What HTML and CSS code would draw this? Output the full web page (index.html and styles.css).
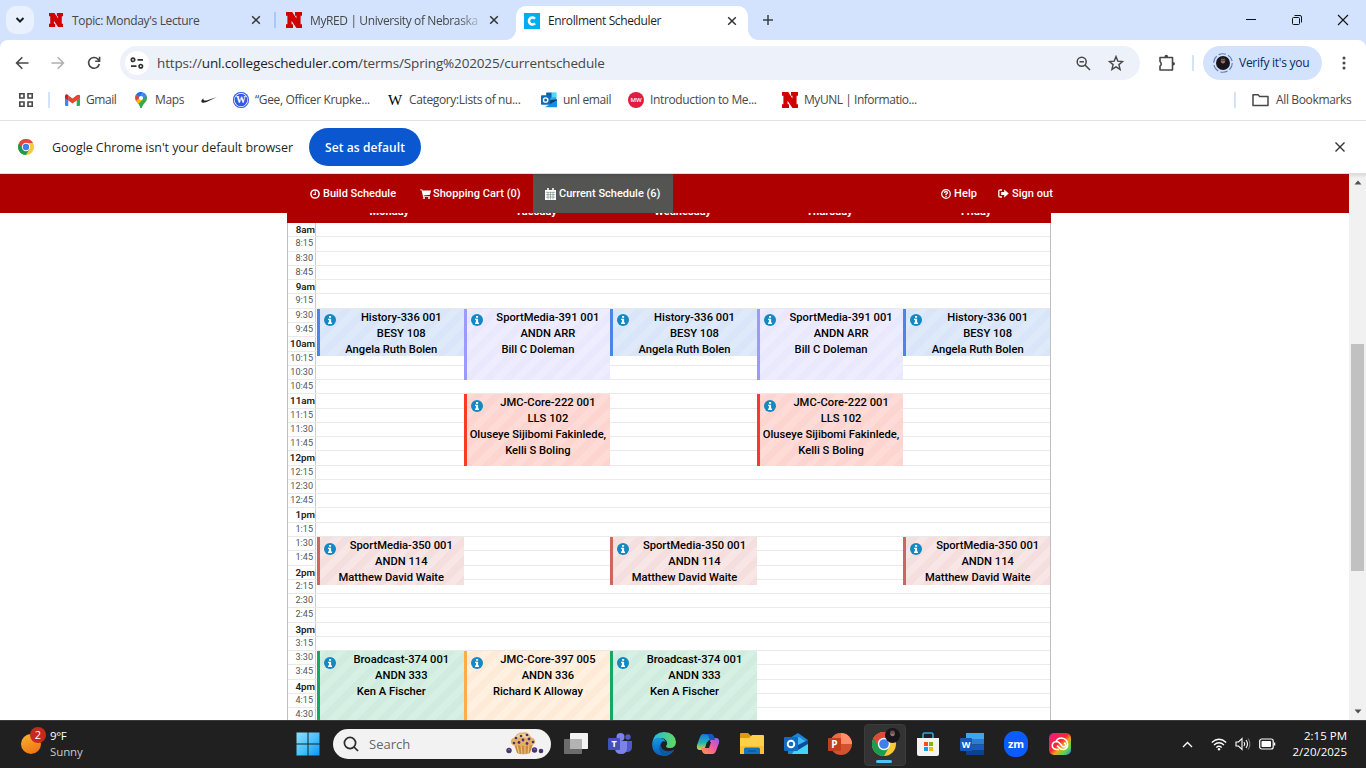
FILE: index.html
```html
<!DOCTYPE html>
<html lang="en">
<head>
<meta charset="utf-8">
<title>Enrollment Scheduler</title>
<link rel="stylesheet" href="styles.css">
</head>
<body>
<svg width="0" height="0" class="defs" aria-hidden="true">
  <defs>
    <symbol id="x" viewBox="0 0 10 10"><path d="M1.200 1.200l7.600 7.600M8.800 1.200l-7.600 7.600" stroke="currentColor" stroke-width="1.500" fill="none"/></symbol>
    <symbol id="huskers" viewBox="0 0 16 16"><path fill="#d00000" d="M0 0h6.200l4.200 6.400V3.800H9V0h7v3.800h-1.400v8.400H16V16h-5.600L5.600 8.800v3.400H7V16H0v-3.800h1.400V3.800H0z"/></symbol>
    <symbol id="chrome" viewBox="0 0 24 24"><circle cx="12" cy="12" r="12" fill="#fbc934"/><path d="M12 12L1.600 6A12 12 0 0 0 12 24l5.200-9z" fill="#1b9d4f"/><path d="M1.600 6A12 12 0 0 1 22.400 6H12L6.800 15z" fill="#e1483b"/><circle cx="12" cy="12" r="6.200" fill="#fff"/><circle cx="12" cy="12" r="4.800" fill="#3f80ee"/></symbol>
    <symbol id="info" viewBox="0 0 12 12"><circle cx="6" cy="6" r="6" fill="#1488c0"/><path fill="#fff" d="M5 2h2.100v1.800H5zM4 4.700h3.100v3.800h.9V10H4V8.500h.9V6.100H4z"/></symbol>
    <symbol id="outlook" viewBox="0 0 24 24"><path fill="#28a8ea" d="M8 1h15v13H8z"/><path fill="#0f5ea8" d="M8 1h8v7H8z"/><path fill="#50d9ff" d="M16 1h7v7h-7z"/><path fill="#123b6d" d="M7 13l17-2v5l-8 4-9-4z"/><path fill="#1490df" d="M7 22l17-10v11H7z"/><rect y="5" width="14" height="14" rx="1" fill="#0f6cbd"/><circle cx="7" cy="12" r="3.300" fill="none" stroke="#fff" stroke-width="2"/></symbol>
    <symbol id="avatar" viewBox="0 0 16 16"><circle cx="8" cy="8" r="8" fill="#17151b"/><ellipse cx="8" cy="5.500" rx="2.500" ry="3.200" fill="#9a7468"/><path d="M5.200 4.500Q5 1.500 8 1.500t2.800 3L10 3.800H6z" fill="#302628"/><path d="M5.500 5.300h5" stroke="#29242a" stroke-width=".8"/></symbol>
  </defs>
</svg>

<header class="tabstrip">
  <button class="tab-search"><svg width="10" height="8" viewBox="0 0 10 8"><path d="M1.500 2L5 5.500 8.500 2" fill="none" stroke="#1f1f1f" stroke-width="2"/></svg></button>
  <div class="tab tab-first"><svg class="fav small"><use href="#huskers"/></svg><span class="t-topic">Topic: Monday's Lecture</span><svg class="close"><use href="#x"/></svg></div>
  <i class="tab-sep"></i>
  <div class="tab tab-second"><svg class="fav"><use href="#huskers"/></svg><span class="t-myred">MyRED | University of Nebraska</span><svg class="close"><use href="#x"/></svg></div>
  <div class="tab active"><svg class="c-logo" viewBox="0 0 16 16"><path fill="#00aeef" d="M0 0h16v16H0z"/><path d="M11 5.600A3.500 3.500 0 1 0 11 10.400" fill="none" stroke="#fff" stroke-width="2.500"/></svg><span class="t-enroll">Enrollment Scheduler</span><svg class="close"><use href="#x"/></svg></div>
  <svg class="plus" width="12" height="12" viewBox="0 0 12 12"><path d="M6 1v10M1 6h10" stroke="#3c4043" stroke-width="1.500"/></svg>
  <div class="window-controls">
    <svg width="12" height="12" viewBox="0 0 12 12"><path d="M1 5.500h10" stroke="#111"/></svg>
    <svg width="12" height="12" viewBox="0 0 12 12" fill="none" stroke="#111"><rect x="1.500" y="3.500" width="7" height="7" rx="1"/><path d="M3.500 1.500H9q1.500 0 1.500 1.500v5.500"/></svg>
    <svg width="12" height="12" viewBox="0 0 12 12"><path d="M1 1l10 10M11 1L1 11" stroke="#111" stroke-width="1.100"/></svg>
  </div>
</header>

<section class="toolbar-wrap">
<div class="toolbar">
  <div class="nav-icons">
    <svg width="14" height="14" viewBox="0 0 14 14" fill="none" stroke="#474747" stroke-width="1.600"><path d="M13.500 7H2M7.300 1.300L1.600 7l5.700 5.700"/></svg>
    <svg width="14" height="14" viewBox="0 0 14 14" fill="none" stroke="#b0b0b0" stroke-width="1.600"><path d="M.5 7H12M6.700 1.300L12.400 7l-5.700 5.700"/></svg>
    <svg width="14" height="14" viewBox="0 0 14 14" fill="none" stroke="#474747" stroke-width="1.600"><path d="M12.300 8A5.400 5.400 0 1 1 10.900 3.100L12.500 4.800M12.600.8v4.400H8.200"/></svg>
  </div>
  <div class="omnibox">
    <span class="site-info"><svg width="14" height="12" viewBox="0 0 14 12" fill="none" stroke="#333" stroke-width="1.700"><circle cx="3" cy="2.800" r="1.700"/><path d="M7.500 2.800H13M1 9.200h5.500"/><circle cx="10.800" cy="9.200" r="1.700"/></svg></span>
    <span class="url">https://<b>unl.collegescheduler.com</b>/terms/Spring%202025/currentschedule</span>
    <svg class="mag" width="15" height="15" viewBox="0 0 15 15" fill="none" stroke="#474747" stroke-width="1.500"><circle cx="5.700" cy="5.700" r="4.500"/><path d="M9 9l5 5M3.500 5.700h4.400"/></svg>
    <svg class="star" width="16" height="16" viewBox="0 0 16 16" fill="none" stroke="#474747" stroke-width="1.400"><path d="M8 1.600l1.800 4.500 4.800.4-3.700 3.100 1.200 4.800L8 11.800l-4.100 2.600 1.200-4.800L1.400 6.500l4.800-.4z"/></svg>
  </div>
  <svg class="puzzle" width="18" height="18" viewBox="0 0 18 18"><path d="M2 3.500h12.500v12.500H2V12q2.500-2 0-4.500z" fill="none" stroke="#474747" stroke-width="1.600" stroke-linejoin="round"/><path d="M6.500 3q0-2.300 1.800-2.300T10.100 3zM15 8q2 0 2 1.800T15 11.600z" fill="#474747"/></svg>
  <i class="bar-sep"></i>
  <div class="verify"><span class="ring"><svg class="ring-line" viewBox="0 0 20 20"><circle cx="10" cy="10" r="9.300" fill="none" stroke="#5f7fb5" stroke-width="1.100" stroke-dasharray="7.500 2.240"/></svg><svg width="14" height="14"><use href="#avatar"/></svg></span><span class="t-verify">Verify it's you</span></div>
  <svg class="dots" width="4" height="14" viewBox="0 0 4 14" fill="#474747"><circle cx="2" cy="2" r="1.500"/><circle cx="2" cy="7" r="1.500"/><circle cx="2" cy="12" r="1.500"/></svg>
</div>

<div class="bookmarks">
  <svg class="apps" width="14" height="14" viewBox="0 0 14 14" fill="none" stroke="#474747" stroke-width="1.600"><path d="M.8.8H5V5H.8zM9 .8h4.200V5H9zM.8 9H5v4.200H.8zM9 9h4.200v4.200H9z"/></svg>
  <i class="bar-sep"></i>
  <div class="bm b-gmail"><svg width="15" height="12" viewBox="0 0 15 12"><path fill="#4285f4" d="M0 2h3.300v10H1q-1 0-1-1z"/><path fill="#34a853" d="M11.700 2H15v9q0 1-1 1h-2.300z"/><path fill="#fbbc04" d="M11.700 1.500L15 1v3l-3.300 2.500z"/><path fill="#c5221f" d="M0 2Q0 0 2 .3l1.300 1v5.200L0 4z"/><path fill="#ea4335" d="M3.300 1.300L7.500 4.500l4.200-3.200Q14 0 15 1.500V4L7.500 9.600 3.300 6.500z"/></svg><span>Gmail</span></div>
  <div class="bm b-maps"><svg width="12" height="16" viewBox="0 0 12 16"><path fill="#34a853" d="M1.200 9.200L11.500 3.500Q13 7 10.500 10 7.500 13 6.700 16H5.300Q4.500 12.500 1.200 9.200z"/><path fill="#fbbc04" d="M1 9l4-4.500 3 3.300-5 4.200z"/><path fill="#1a73e8" d="M1 2.500A6 6 0 0 1 7.800.2L4.500 6z"/><path fill="#ea4335" d="M1 2.500l4 3.300L1 9Q-1 5.500 1 2.500z"/><path fill="#4285f4" d="M7.800.2Q10.600 1 11.500 3.500L7 8.500 5 5z"/><circle cx="6" cy="6" r="2.100" fill="#fff"/></svg><span>Maps</span></div>
  <div class="bm b-nike"><svg width="16" height="8" viewBox="0 0 16 8"><path fill="#222" d="M2.500 2.200Q0 4 .3 5.700 1 7.500 5 6.300L16 1 5.500 4.400Q1.700 5 2.500 2.200z"/></svg></div>
  <div class="bm b-gee"><span class="wp">W</span><span>“Gee, Officer Krupke...</span></div>
  <div class="bm b-cat"><span class="wiki">W</span><span>Category:Lists of nu...</span></div>
  <div class="bm b-mail"><svg width="16" height="16"><use href="#outlook"/></svg><span>unl email</span></div>
  <div class="bm b-intro"><span class="mw">MW</span><span>Introduction to Me...</span></div>
  <div class="bm b-unl"><svg width="16" height="16"><use href="#huskers"/></svg><span>MyUNL | Informatio...</span></div>
  <div class="bm b-all"><i class="bar-sep"></i><svg width="17" height="14" viewBox="0 0 17 14"><path d="M1 1.800h5l1.700 1.700H16v9H1z" fill="none" stroke="#474747" stroke-width="1.500" stroke-linejoin="round"/></svg><span>All Bookmarks</span></div>
</div>
</section>

<div class="infobar">
  <svg class="chrome-logo"><use href="#chrome"/></svg>
  <span class="msg">Google Chrome isn't your default browser</span>
  <button class="default-btn"><span>Set as default</span></button>
  <svg class="info-close" viewBox="0 0 12 12"><path d="M1.500 1.500l9 9M10.500 1.500l-9 9" stroke="#333" stroke-width="1.400"/></svg>
</div>

<main class="viewport">
  <div class="page">
    <nav class="appnav">
      <a class="n-build"><svg width="10" height="10" viewBox="0 0 10 10" fill="none" stroke="#fff" stroke-width="1.500"><circle cx="5" cy="5" r="4.100"/><path d="M5.300 2.500v3H3.200" stroke-width="1.200"/></svg><span>Build Schedule</span></a>
      <a class="n-cart"><svg width="11" height="10" viewBox="0 0 11 10" fill="#fff"><path d="M0 .4h2.200l.4 1H11L10 5.800l-6.300.7.2.7H10V8H3.100L1.600 1.300H0z"/><circle cx="4" cy="9" r="1"/><circle cx="9" cy="9" r="1"/></svg><span>Shopping Cart (0)</span></a>
      <a class="n-current"><svg width="11" height="12" viewBox="0 0 11 12"><path fill="#fff" d="M0 2h11v10H0zM2.200 0h1.600v3H2.200zM7.200 0h1.600v3H7.200z"/><path stroke="#658079" stroke-width=".6" d="M.8 4.300h9.400M.8 6.700h9.400M.8 9.100h9.400M3 4v7.300M5.500 4v7.300M8 4v7.300"/></svg><span>Current Schedule (6)</span></a>
      <a class="n-help"><svg width="10" height="10" viewBox="0 0 10 10" fill="none" stroke="#fff" stroke-width="1.200"><circle cx="5" cy="5" r="4.300"/><path d="M3.400 3.800Q3.700 2.500 5 2.500t1.500 1.300Q6.500 4.600 5 5.200V6M5 6.800v1.200" stroke-width="1.300"/></svg><span>Help</span></a>
      <a class="n-out"><svg width="11" height="9" viewBox="0 0 11 9"><path d="M4 1H2.300Q.8 1 .8 2.300v4.400Q.8 8 2.300 8H4" fill="none" stroke="#fff" stroke-width="1.300"/><path d="M3.200 3h3V.6l4.500 3.900-4.500 3.900V6h-3z" fill="#fff"/></svg><span>Sign out</span></a>
    </nav>
    <section class="schedule">
      <div class="days"><span>Monday</span><span>Tuesday</span><span>Wednesday</span><span>Thursday</span><span>Friday</span></div>
      <div class="grid">
        <ol class="times">
          <li class="h">8am</li><li>8:15</li><li>8:30</li><li>8:45</li>
          <li class="h">9am</li><li>9:15</li><li>9:30</li><li>9:45</li>
          <li class="h">10am</li><li>10:15</li><li>10:30</li><li>10:45</li>
          <li class="h">11am</li><li>11:15</li><li>11:30</li><li>11:45</li>
          <li class="h">12pm</li><li>12:15</li><li>12:30</li><li>12:45</li>
          <li class="h">1pm</li><li>1:15</li><li>1:30</li><li>1:45</li>
          <li class="h">2pm</li><li>2:15</li><li>2:30</li><li>2:45</li>
          <li class="h">3pm</li><li>3:15</li><li>3:30</li><li>3:45</li>
          <li class="h">4pm</li><li>4:15</li><li>4:30</li>
        </ol>
        <div class="columns">
          <div class="col">
            <article class="ev history"><svg><use href="#info"/></svg><p>History-336 001</p><p>BESY 108</p><p>Angela Ruth Bolen</p></article>
            <article class="ev sm350"><svg><use href="#info"/></svg><p>SportMedia-350 001</p><p>ANDN 114</p><p>Matthew David Waite</p></article>
            <article class="ev broadcast"><svg><use href="#info"/></svg><p>Broadcast-374 001</p><p>ANDN 333</p><p>Ken A Fischer</p></article>
          </div>
          <div class="col">
            <article class="ev sm391"><svg><use href="#info"/></svg><p>SportMedia-391 001</p><p>ANDN ARR</p><p>Bill C Doleman</p></article>
            <article class="ev jmc222"><svg><use href="#info"/></svg><p>JMC-Core-222 001</p><p>LLS 102</p><p>Oluseye Sijibomi Fakinlede,</p><p>Kelli S Boling</p></article>
            <article class="ev jmc397"><svg><use href="#info"/></svg><p>JMC-Core-397 005</p><p>ANDN 336</p><p>Richard K Alloway</p></article>
          </div>
          <div class="col">
            <article class="ev history"><svg><use href="#info"/></svg><p>History-336 001</p><p>BESY 108</p><p>Angela Ruth Bolen</p></article>
            <article class="ev sm350"><svg><use href="#info"/></svg><p>SportMedia-350 001</p><p>ANDN 114</p><p>Matthew David Waite</p></article>
            <article class="ev broadcast"><svg><use href="#info"/></svg><p>Broadcast-374 001</p><p>ANDN 333</p><p>Ken A Fischer</p></article>
          </div>
          <div class="col">
            <article class="ev sm391"><svg><use href="#info"/></svg><p>SportMedia-391 001</p><p>ANDN ARR</p><p>Bill C Doleman</p></article>
            <article class="ev jmc222"><svg><use href="#info"/></svg><p>JMC-Core-222 001</p><p>LLS 102</p><p>Oluseye Sijibomi Fakinlede,</p><p>Kelli S Boling</p></article>
          </div>
          <div class="col">
            <article class="ev history"><svg><use href="#info"/></svg><p>History-336 001</p><p>BESY 108</p><p>Angela Ruth Bolen</p></article>
            <article class="ev sm350"><svg><use href="#info"/></svg><p>SportMedia-350 001</p><p>ANDN 114</p><p>Matthew David Waite</p></article>
          </div>
        </div>
      </div>
    </section>
  </div>
  <aside class="scrollbar">
    <svg width="8" height="5" viewBox="0 0 8 5"><path d="M4 .5L7.500 4.500h-7z" fill="#505050"/></svg>
    <i class="thumb"></i>
    <svg width="8" height="5" viewBox="0 0 8 5"><path d="M4 4.500L.5.500h7z" fill="#505050"/></svg>
  </aside>
</main>

<footer class="taskbar">
  <div class="weather"><span class="sun"><b>2</b></span><span class="temps"><span class="deg">9°F</span><span class="cond">Sunny</span></span></div>
  <div class="start"><svg width="24" height="24" viewBox="0 0 24 24"><defs><linearGradient id="wg" x1="0" y1="0" x2="24" y2="24" gradientUnits="userSpaceOnUse"><stop stop-color="#92e0ff"/><stop offset=".55" stop-color="#45c0fb"/><stop offset="1" stop-color="#0a90f5"/></linearGradient></defs><path fill="url(#wg)" d="M.5.500h11v11H.5zM12.500.500h11v11h-11zM.5 12.500h11v11H.5zM12.500 12.500h11v11h-11z"/></svg></div>
  <div class="search"><svg width="16" height="16" viewBox="0 0 16 16" fill="none" stroke="#2b2b2b" stroke-width="1.700"><circle cx="7" cy="7" r="5.600"/><path d="M11 11l4 4"/></svg><span>Search</span>
    <svg class="muffin" width="38" height="24" viewBox="0 0 38 24"><path d="M8 12h19l-3 9q-7 2.500-13 0z" fill="#c98a3e"/><path d="M11 13l2 8M15 13l1 9M19 13v9M23 13l-1 9" stroke="#f0c27c" stroke-width="1.200"/><path d="M5 11Q4 7 9 5q2-5 8-4.500Q22-1 25 5q5 2 4 6-2 3-6 2-5 2-8 0-8 2-10-2z" fill="#e4b069"/><path d="M9 6q3-5 9-4 5 0 6 5-7-3-15-1z" fill="#f6d296"/><g fill="#46346f"><circle cx="10" cy="6" r="1.300"/><circle cx="15" cy="4" r="1.300"/><circle cx="21" cy="3" r="1.300"/><circle cx="17" cy="8" r="1.400"/><circle cx="23" cy="7" r="1.400"/><circle cx="8" cy="11" r="1.300"/><circle cx="13" cy="10.500" r="1.400"/><circle cx="21" cy="11.500" r="1.400"/><circle cx="27" cy="10" r="1.300"/><circle cx="3" cy="18.500" r="2.700"/><circle cx="28.500" cy="18" r="2.700"/><circle cx="35" cy="19" r="2.300"/></g><path d="M2 17.500l2 .5M27.500 17l2 .5" stroke="#8574b6"/></svg>
  </div>
  <div class="apps-row">
    <div><svg width="24" height="24" viewBox="0 0 24 24"><rect x="6" y="1" width="18" height="16" rx=".8" fill="#f2f2f2"/><rect y="7" width="18" height="15" rx=".8" fill="#6c6c6c"/><path d="M6 7h12v10H6z" fill="#b3b3b3"/></svg></div>
    <div><svg width="24" height="24" viewBox="0 0 24 24"><circle cx="20" cy="5" r="2.700" fill="#5059c9"/><path d="M15 9h9v6q0 5-5 5h-3z" fill="#5059c9"/><circle cx="12.500" cy="5" r="4" fill="#7b83eb"/><path d="M7 9h12v7q0 6-6 6t-6-6z" fill="#7b83eb"/><rect y="6" width="12" height="12" rx="1" fill="#4650b8"/><text x="6" y="15.300" text-anchor="middle" class="g-letter" font-size="9">T</text></svg></div>
    <div><svg width="24" height="24" viewBox="0 0 24 24"><defs><linearGradient id="eg"><stop stop-color="#26b4ef"/><stop offset="1" stop-color="#61dc59"/></linearGradient><linearGradient id="eb" x2="0" y2="1"><stop stop-color="#159ae0"/><stop offset="1" stop-color="#0a5cb8"/></linearGradient></defs><path d="M.2 11Q2 0 12 0q11 .5 12 10-.5 6-6 6-4 0-4-2 2-2 .5-5Q12 5 7 6.500 1.500 8 .2 11z" fill="url(#eg)"/><path d="M.2 11Q2 5 8.500 6q4 .5 5 4-2-1.500-4 .5-3 4 2 8 5 3 10.500-.5Q18 24 12 24-.500 23 .2 11z" fill="url(#eb)"/><path d="M9.500 10.500q-4 5-1 9.500 2 4 6 3.500 5-1 8-6-5 3-10 1-5-3-3-8z" fill="#0c59a4"/></svg></div>
    <div><svg width="24" height="24" viewBox="0 0 24 24"><defs><linearGradient id="ca" x1="0" y1="0" x2="0" y2="1"><stop stop-color="#1779de"/><stop offset=".55" stop-color="#25b3b0"/><stop offset="1" stop-color="#e6d52e"/></linearGradient><linearGradient id="cb" x1="1" y1="0" x2="0" y2="1"><stop stop-color="#8b5cf6"/><stop offset=".45" stop-color="#ee5aa5"/><stop offset="1" stop-color="#ff9c38"/></linearGradient></defs><path d="M7 2h8q2 0 3 3l1 3h-5q-2 0-2.500 2l-2 6q-.8 2-3 2H4q-4 0-3-5l3-8q1-3 3-3z" fill="url(#ca)"/><path d="M17 22H9q-2 0-3-3l-1-3h5q2 0 2.500-2l2-6q.8-2 3-2H20q4 0 3 5l-3 8q-1 3-3 3z" fill="url(#cb)"/><path d="M7 2h8q2 0 3 3l1 3h-5L12 3z" fill="#1254cc"/><path d="M11 10h4l-2 6h-4z" fill="#202020"/></svg></div>
    <div><svg width="24" height="24" viewBox="0 0 24 24"><path d="M0 2q0-1 1-1h7l3 3v4H0z" fill="#e09b0c"/><path d="M0 6h9l3-3h11q1 0 1 1v18H0z" fill="#ffcf48"/><path d="M0 14h24v8H0z" fill="#fac02f"/><path d="M4 22v-5q0-1.500 1.500-1.500h13Q20 15.500 20 17v5z" fill="#1370c0"/><path d="M8 19h8" stroke="#094d8b"/></svg></div>
    <div><svg width="24" height="24" viewBox="0 0 24 24"><path d="M4 7L14 1l10 7v14H4z" fill="#1786d9"/><path d="M6 9l9-4 9 6-8 8z" fill="#3fb9f0"/><path d="M13 14l11-4v12H8z" fill="#46d2f7"/><path d="M12 14l12-6v4l-10 6z" fill="#0b4f99"/><rect y="5" width="14" height="14" rx="1" fill="#0f6cc4"/><circle cx="7" cy="12" r="3.300" fill="none" stroke="#fff" stroke-width="1.900"/></svg></div>
    <div><svg width="24" height="24" viewBox="0 0 24 24"><circle cx="13" cy="12" r="11" fill="#d35230"/><path d="M13 1a11 11 0 0 1 11 11H13z" fill="#ff8f6b"/><path d="M2 12A11 11 0 0 1 13 1v11z" fill="#ed6c47"/><rect y="6" width="13" height="13" rx="1" fill="#c43e1c"/><text x="6.500" y="16" text-anchor="middle" class="g-letter" font-size="10">P</text></svg></div>
    <div class="running"><svg width="24" height="24"><use href="#chrome"/></svg><svg class="mini-avatar" width="15" height="15"><use href="#avatar"/></svg></div>
    <div><svg width="24" height="25" viewBox="0 0 24 25"><path d="M7 7V2.500Q7 1 8.500 1h7Q17 1 17 2.500V7" fill="none" stroke="#22a9ee" stroke-width="1.600"/><path d="M1 6h22v16q0 2-2 2H3q-2 0-2-2z" fill="#f3f3f3"/><path d="M8 10h4v4H8z" fill="#f04f23"/><path d="M13 10h4v4h-4z" fill="#7db900"/><path d="M8 15h4v4H8z" fill="#10a0e4"/><path d="M13 15h4v4h-4z" fill="#fab800"/></svg></div>
    <div><svg width="24" height="24" viewBox="0 0 24 24"><path fill="#41a5ee" d="M6 1h18v6H6z"/><path fill="#2b7cd3" d="M6 7h18v5.500H6z"/><path fill="#185abd" d="M6 12.500h18V18H6z"/><path fill="#103f91" d="M6 18h18v5H6z"/><rect y="6" width="12" height="13" rx="1" fill="#1658ba"/><text x="6" y="16" text-anchor="middle" class="g-letter" font-size="9">W</text></svg></div>
    <div><svg width="24" height="26" viewBox="0 0 24 26"><rect width="24" height="26" rx="11" fill="#0b5cff"/><text x="12" y="17" text-anchor="middle" class="g-letter" font-size="11">zm</text></svg></div>
    <div><span class="cc"><svg width="18" height="14" viewBox="0 0 18 14" fill="none" stroke="#fff" stroke-width="1.600"><path d="M8 12.500H5.500Q1.300 12 1.300 8.500t4-4q2.200 0 3.700 2l2 2.500q1 1 2 1 1.800-.3 1.800-2t-1.800-1.900M5 4.500Q6.500 1 10.500 1q5.500.500 6.200 6 0 5-4.700 5.500-2.500 0-4-2L6 8.500"/></svg></span></div>
  </div>
  <div class="tray">
    <svg width="11" height="7" viewBox="0 0 11 7"><path d="M1 6l4.500-4.500L10 6" fill="none" stroke="#fff" stroke-width="1.400"/></svg>
    <svg width="16" height="13" viewBox="0 0 16 13" fill="none" stroke="#fff" stroke-width="1.300"><path d="M.8 4.500Q8-2 15.200 4.500M3 7q5-4.500 10 0M5.300 9.400q2.700-2.300 5.400 0"/><circle cx="8" cy="11.300" r="1.200" fill="#fff" stroke="none"/></svg>
    <svg width="16" height="14" viewBox="0 0 16 14" fill="none" stroke="#fff" stroke-width="1.100"><path d="M1 5h2.500L7 1.500v11L3.500 9H1zM9 5q1.500 2 0 4M11 3q3 4 0 8"/><path d="M13 1.500q4 5.500 0 11" stroke="#777"/></svg>
    <svg width="17" height="12" viewBox="0 0 17 12"><rect x=".7" y="1" width="13.500" height="10" rx="2" fill="none" stroke="#fff" stroke-width="1.200"/><rect x="2.500" y="3" width="9.500" height="6" rx=".7" fill="#fff"/><path d="M15.500 4.500v3" stroke="#fff" stroke-width="1.500"/></svg>
  </div>
  <div class="clock"><span>2:15 PM</span><span>2/20/2025</span></div>
</footer>
</body>
</html>
```

FILE: styles.css
```css
* { box-sizing: border-box; }
html, body { margin: 0; height: 100%; overflow: hidden; }
body { display: flex; flex-direction: column; width: 1366px; height: 768px; background: #fff; color: #1f1f1f; font: 12px/16px "Open Sans", "Noto Sans", sans-serif; white-space: nowrap; }
button { border: 0; padding: 0; margin: 0; font: inherit; }
svg { flex: none; display: block; }
.defs { position: absolute; }

/* Tab strip */
.tabstrip { display: flex; align-items: center; height: 40px; flex: none; padding-left: 6px; background: #d3e3fd; color: #474747; }
.tab-search { width: 28px; height: 28px; border-radius: 10px; background: #e9f1fe; display: grid; place-items: center; }
.tab { display: flex; align-items: center; height: 34px; }
.tab span { padding-top: 1px; }
.fav { width: 16px; height: 16px; margin-right: 8px; }
.fav.small { width: 14px; height: 14px; margin-right: 9px; }
.close { width: 10px; height: 10px; margin-left: auto; color: #333; }
.tab-first { width: 241px; padding: 0 14px 0 15px; }
.tab-sep { width: 2px; height: 16px; background: #a8c7fa; margin-right: 10px; margin-left: -1px; }
.tab-second { width: 230px; padding-right: 17px; }
.t-myred { -webkit-mask-image: linear-gradient(90deg, #000 88%, rgba(0,0,0,.25)); mask-image: linear-gradient(90deg, #000 88%, rgba(0,0,0,.25)); }
.active { position: relative; align-self: flex-end; width: 232px; padding: 0 11px 5px 8px; background: #fff; color: #1f1f1f; border-radius: 10px 10px 0 0; }
.active::before, .active::after { content: ""; position: absolute; bottom: 0; width: 10px; height: 10px; }
.active::before { left: -10px; background: radial-gradient(circle at 0 0, transparent 9.500px, #fff 10px); }
.active::after { right: -10px; background: radial-gradient(circle at 100% 0, transparent 9.500px, #fff 10px); }
.c-logo { width: 16px; height: 16px; margin-right: 8px; }
.t-topic { letter-spacing: -.34px; }
.t-enroll, .t-myred { letter-spacing: -.38px; }
.plus { margin-left: 14px; }
.window-controls { display: flex; gap: 34px; margin-left: auto; padding-right: 17px; }

/* Toolbar */
.toolbar-wrap { flex: none; height: 81px; background: linear-gradient(#d3e3fd 10px, #fff 10px); border-bottom: 1px solid #dfe1e5; }
.toolbar { display: flex; align-items: center; height: 46px; background: #fff; border-radius: 8px 8px 0 0; }
.nav-icons { display: flex; gap: 22px; width: 120px; padding-left: 15px; }
.omnibox { display: flex; align-items: center; width: 1020px; height: 34px; border-radius: 17px; padding-left: 5px; background: #ecf1fa; }
.site-info { width: 24px; height: 24px; border-radius: 50%; background: #fff; display: grid; place-items: center; margin-right: 8px; }
.url { font-size: 13.500px; letter-spacing: -.15px; color: #474747; width: 919px; }
.url b { font-weight: 400; color: #1f1f1f; }
.star { margin-left: 17px; }
.puzzle { margin-left: 18px; }
.bar-sep { flex: none; width: 2px; height: 16px; background: #d3e3fd; }
.toolbar > .bar-sep { margin-left: 16px; }
.verify { display: flex; align-items: center; width: 119px; height: 34px; margin-left: 9px; border-radius: 17px; padding-left: 10px; background: #d3e3fd; color: #0b2a5e; letter-spacing: -.27px; }
.ring { position: relative; width: 20px; height: 20px; display: grid; place-items: center; margin-right: 6px; }
.ring-line { position: absolute; inset: 0; width: 20px; height: 20px; }
.dots { margin-left: 20px; }

.bookmarks { display: flex; align-items: center; height: 28px; color: #474747; }
.apps { margin: 0 15px 0 19px; }
.bm { display: flex; align-items: center; gap: 6px; flex: none; }
.bm span { letter-spacing: -.36px; }
.b-gmail { margin-left: 15px; width: 70px; }
.b-gmail span { letter-spacing: -.45px; }
.b-maps { width: 66px; gap: 8px; }
.b-nike { width: 32px; }
.b-gee { width: 155px; }
.b-cat { width: 153px; }
.b-mail { width: 87px; }
.b-intro { width: 154px; }
.b-unl { width: 452px; }
.b-unl span { letter-spacing: -.46px; }
.b-all { gap: 0; }
.b-all svg { margin: 0 7px 0 16px; }
.bm .wp { width: 16px; height: 16px; border-radius: 50%; background: #3858e9; box-shadow: inset 0 0 0 1px #3858e9, inset 0 0 0 1.700px #fff; color: #fff; font: bold 10px/16px "Liberation Serif", serif; text-align: center; letter-spacing: 0; }
.wiki { width: 15px; font: 15px/16px "Liberation Serif", serif; color: #000; }
.bm .mw { width: 16px; height: 16px; border-radius: 50%; background: #e31b3c; color: #fff; font: 600 6px/16px "Open Sans", sans-serif; text-align: center; letter-spacing: -.2px; }

.infobar { display: flex; align-items: center; flex: none; height: 53px; padding: 0 20px 0 18px; border-bottom: 1px solid #dcdcdc; }
.chrome-logo { width: 16px; height: 16px; margin-right: 18px; }
.msg { width: 257px; padding-top: 1px; font-size: 12.500px; letter-spacing: -.07px; }
.default-btn { width: 112px; height: 38px; border-radius: 19px; padding-top: 1px; background: #0b57d0; color: #fff; font-weight: 600; letter-spacing: .1px; }
.info-close { width: 12px; height: 12px; margin-left: auto; }

/* Scheduler page */
.viewport { display: flex; flex: none; height: 546px; font-family: Roboto, sans-serif; }
.page { width: 1349px; overflow: hidden; }
.appnav { position: relative; z-index: 2; display: flex; height: 39px; padding-left: 298px; background: linear-gradient(#970d0d, #af0000 3px); color: #fff; font-size: 11px; font-weight: 500; }
.appnav a { display: flex; align-items: center; height: 39px; gap: 3px; padding-left: 12px; }
.n-build { width: 110px; }
.appnav .n-cart { width: 125px; gap: 2px; letter-spacing: .05px; }
.n-current { width: 140px; background: linear-gradient(#4a4a48, #545552 3px); }
.n-help { margin-left: 256px; width: 57px; letter-spacing: .1px; }
.n-out { width: 80px; letter-spacing: .05px; }
.schedule { width: 764px; margin: -14px 0 0 287px; }
.days { display: grid; grid-template-columns: repeat(5, 146.700px); height: 24px; padding-left: 29px; background: #af0000; color: #fff; font-size: 11px; font-weight: 700; line-height: 26px; text-align: center; }
.grid { display: flex; border: solid #bfbfbf; border-width: 0 1px; height: 498px; overflow: hidden; background: #fff; }
.times { flex: none; width: 28px; margin: 0; padding: .13px 0 0; list-style: none; border-right: 1px solid #ccc; font-size: 9.100px; color: #555; text-align: right; }
.times li { position: relative; height: 14.270px; line-height: 12.500px; padding-right: 2px; }
.times li::after { content: ""; position: absolute; left: 0; bottom: 0; width: 762px; height: 1px; background: #e9e9e9; }
.times .h { padding-right: 0; font-size: 9.800px; font-weight: 600; line-height: 13.500px; color: #222; }
.columns { position: relative; z-index: 1; display: grid; grid-template-columns: repeat(5, 146.600px); margin-left: 1px; }
.col { position: relative; }
.ev { position: absolute; left: 0; width: 100%; border-left: 3px solid; padding-right: 1px; color: #000; font-size: 11.200px; font-weight: 500; line-height: 16px; text-align: center; overflow: hidden; }
.ev p { position: relative; top: 1px; margin: 0; }
.ev svg { float: left; width: 12px; height: 12px; margin: 5px 4px 4px; }
.history { top: 86px; height: 47px; border-color: #4a86e8; background: repeating-linear-gradient(-45deg, #d9e6f9 0 7px, #deeafa 7px 14px); }
.sm391 { top: 86px; height: 71px; border-color: #9a9aff; background: repeating-linear-gradient(-45deg, #e9e8fd 0 7px, #eeedff 7px 14px); }
.jmc222 { top: 171px; height: 72px; border-color: #fb3a26; background: repeating-linear-gradient(-45deg, #fdd5d0 0 7px, #ffdbd7 7px 14px); }
.sm350 { top: 314px; height: 48px; border-color: #cc6662; background: repeating-linear-gradient(-45deg, #f5dede 0 7px, #f8e5e5 7px 14px); }
.broadcast { top: 428px; height: 90px; border-color: #16a765; background: repeating-linear-gradient(-45deg, #d0ebdf 0 7px, #d6f0e4 7px 14px); }
.jmc397 { top: 428px; height: 90px; border-color: #ffad46; background: repeating-linear-gradient(-45deg, #feebd7 0 7px, #fff0df 7px 14px); }
.jmc222 svg, .sm350 svg, .broadcast svg, .jmc397 svg { margin: 6px 4px 3px; }
.scrollbar { width: 17px; display: flex; flex-direction: column; align-items: center; padding: 6px 0 0; background: linear-gradient(#dcdcdc, #f1f1f1 4px); }
.thumb { flex: none; width: 13px; height: 227px; margin: 159px 0 138px; background: #c1c1c1; }

/* Taskbar */
.taskbar { display: flex; align-items: center; flex: none; height: 48px; background: #202020; box-shadow: inset 0 1px #3a3a3a; color: #fff; }
.weather { display: flex; width: 286px; padding-left: 21px; }
.sun { position: relative; width: 20px; height: 20px; margin: 6px 9px 0 0; border-radius: 50%; background: linear-gradient(155deg, #f7b731, #ef6a10); }
.sun b { position: absolute; left: 9px; top: -7px; width: 16px; height: 16px; border-radius: 50%; background: #c42b1c; font: 11px/16px "Open Sans", sans-serif; text-align: center; }
.temps, .clock { display: flex; flex-direction: column; font-size: 11.500px; line-height: 16px; }
.deg { letter-spacing: -.4px; }
.cond { color: #c8c8c8; letter-spacing: -.1px; }
.start { width: 43px; display: grid; place-items: center; margin-right: 4px; }
.search { display: flex; align-items: center; width: 218px; height: 30px; padding: 0 7px 0 10px; border-radius: 15px; background: #f2f2f2; color: #666; font-size: 13px; }
.search span { margin-left: 10px; }
.muffin { margin-left: auto; }
.apps-row { display: flex; margin-left: 3px; }
.apps-row > div { position: relative; width: 44px; height: 40px; display: grid; place-items: center; }
.g-letter { font-family: "Open Sans", sans-serif; font-weight: 700; fill: #fff; }
.running::before { content: ""; position: absolute; left: 2px; top: 0; width: 40px; height: 40px; border-radius: 4px; background: #333; border: 1px solid #3c3c3c; }
.running::after { content: ""; position: absolute; left: 14px; bottom: 1px; width: 16px; height: 3px; border-radius: 2px; background: #4cc2ff; }
.running svg { position: relative; }
.running .mini-avatar { position: absolute; right: 6px; top: 4px; }
.cc { width: 22px; height: 22px; border-radius: 5px; display: grid; place-items: center; background: linear-gradient(135deg, #f0188f, #fa2634 45%, #f0a31b 60%, #55d94c 80%, #2b70ff); }
.tray { display: flex; align-items: center; margin-left: 100px; gap: 8px; }
.tray svg:first-child { margin-right: 10px; }
.clock { margin-left: auto; margin-right: 19px; text-align: right; }
```
